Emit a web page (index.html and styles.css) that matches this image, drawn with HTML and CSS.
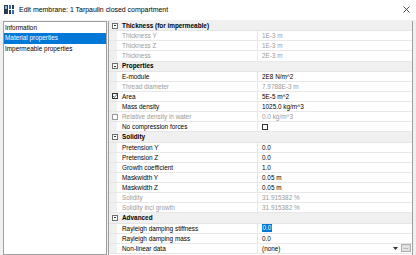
FILE: index.html
```html
<!DOCTYPE html>
<html>
<head>
<meta charset="utf-8">
<link rel="stylesheet" href="styles.css">
</head>
<body>
<div class="window">
  <div class="titlebar">
    <svg class="appicon" width="10" height="9" viewBox="0 0 10 9">
      <rect x="0" y="0" width="4" height="9" fill="#2b3a55"/>
      <rect x="1" y="1" width="2" height="3" fill="#8fb4e0"/>
      <rect x="5" y="0" width="2" height="4" fill="#2f6fc0"/>
      <rect x="8" y="0" width="2" height="4" fill="#2b3a55"/>
      <rect x="5" y="5" width="2" height="4" fill="#2b3a55"/>
      <rect x="8" y="5" width="2" height="4" fill="#2f6fc0"/>
    </svg>
    <span class="title">Edit membrane: 1 Tarpaulin closed compartment</span>
    <svg class="close" width="7" height="7" viewBox="0 0 7 7">
      <path d="M0.5 0.5 L6.5 6.5 M6.5 0.5 L0.5 6.5" stroke="#222" stroke-width="0.8" fill="none"/>
    </svg>
  </div>
  <div class="content">
    <div class="list">
      <div class="item">Information</div>
      <div class="item selected">Material properties</div>
      <div class="item">Impermeable properties</div>
    </div>
    <div class="grid">
      <div class="cat"><span class="toggle"></span><span class="catname">Thickness (for impermeable)</span></div>
      <div class="row ro"><div class="gut"></div><div class="name">Thickness Y</div><div class="val">1E-3 m</div></div>
      <div class="row ro"><div class="gut"></div><div class="name">Thickness Z</div><div class="val">1E-3 m</div></div>
      <div class="row ro"><div class="gut"></div><div class="name">Thickness</div><div class="val">2E-3 m</div></div>
      <div class="cat"><span class="toggle"></span><span class="catname">Properties</span></div>
      <div class="row"><div class="gut"></div><div class="name">E-module</div><div class="val">2E8 N/m^2</div></div>
      <div class="row ro"><div class="gut"></div><div class="name">Thread diameter</div><div class="val">7.9788E-3 m</div></div>
      <div class="row"><div class="gut"><span class="chk checked"><svg width="6" height="6" viewBox="0 0 6 6"><path d="M1 3 L2.4 4.5 L5 1.3" stroke="#333" stroke-width="0.8" fill="none"/></svg></span></div><div class="name">Area</div><div class="val">5E-5 m^2</div></div>
      <div class="row"><div class="gut"></div><div class="name">Mass density</div><div class="val">1025.0 kg/m^3</div></div>
      <div class="row ro"><div class="gut"><span class="chk dim"></span></div><div class="name">Relative density in water</div><div class="val">0.0 kg/m^3</div></div>
      <div class="row"><div class="gut"></div><div class="name">No compression forces</div><div class="val"><span class="chk"></span></div></div>
      <div class="cat"><span class="toggle"></span><span class="catname">Solidity</span></div>
      <div class="row"><div class="gut"></div><div class="name">Pretension Y</div><div class="val">0.0</div></div>
      <div class="row"><div class="gut"></div><div class="name">Pretension Z</div><div class="val">0.0</div></div>
      <div class="row"><div class="gut"></div><div class="name">Growth coefficient</div><div class="val">1.0</div></div>
      <div class="row"><div class="gut"></div><div class="name">Maskwidth Y</div><div class="val">0.05 m</div></div>
      <div class="row"><div class="gut"></div><div class="name">Maskwidth Z</div><div class="val">0.05 m</div></div>
      <div class="row ro"><div class="gut"></div><div class="name">Solidity</div><div class="val">31.915382 %</div></div>
      <div class="row ro"><div class="gut"></div><div class="name">Solidity incl growth</div><div class="val">31.915382 %</div></div>
      <div class="cat"><span class="toggle"></span><span class="catname">Advanced</span></div>
      <div class="row"><div class="gut"></div><div class="name">Rayleigh damping stiffness</div><div class="val"><span class="sel">0.0</span></div></div>
      <div class="row"><div class="gut"></div><div class="name">Rayleigh damping mass</div><div class="val">0.0</div></div>
      <div class="row"><div class="gut"></div><div class="name">Non-linear data</div><div class="val combo"><span class="ctext">(none)</span><span class="drop"><svg width="5" height="3" viewBox="0 0 5 3"><path d="M0 0 H5 L2.5 3 Z" fill="#333"/></svg></span><span class="dots">...</span></div></div>
    </div>
  </div>
</div>
</body>
</html>
```
FILE: styles.css
```css
html, body {
  margin: 0;
  padding: 0;
}
body {
  width: 416px;
  height: 255px;
  overflow: hidden;
  background: #f0f0f0;
  font-family: "Liberation Sans", Arial, sans-serif;
  font-size: 6.4px;
  color: #000;
}
.window {
  width: 416px;
  height: 255px;
  display: flex;
  flex-direction: column;
}
.titlebar {
  height: 20px;
  flex: none;
  background: #fff;
  display: flex;
  align-items: center;
  padding-left: 4px;
  box-sizing: border-box;
}
.appicon {
  flex: none;
  margin-top: -2px;
}
.title {
  margin-left: 5px;
  font-size: 6.95px;
  color: #000;
  flex: 1;
  margin-top: -1px;
}
.close {
  flex: none;
  margin-right: 6px;
  margin-top: -1px;
}
.content {
  flex: 1;
  display: flex;
  padding: 1px 0 0 3px;
  gap: 1px;
  min-height: 0;
}
.list {
  width: 104px;
  flex: none;
  box-sizing: border-box;
  border: 1px solid #a0a0a0;
  background: #fff;
  padding-top: 0.5px;
}
.item {
  height: 10.5px;
  line-height: 10.5px;
  padding-left: 1px;
  white-space: nowrap;
}
.item.selected {
  background: #0078d7;
  color: #fff;
}
.grid {
  width: 305px;
  flex: none;
  box-sizing: border-box;
  border-left: 1px solid #a0a0a0;
  border-right: 1px solid #a0a0a0;
  background: #fff;
  display: flex;
  flex-direction: column;
}
.cat {
  height: 10.14px;
  flex: none;
  box-sizing: border-box;
  background: #f0f0f0;
  border-bottom: 1px solid #e4e4e4;
  display: flex;
  align-items: center;
  padding-left: 3px;
}
.toggle {
  width: 6px;
  height: 6px;
  box-sizing: border-box;
  border: 1px solid #6e6e6e;
  background: #fff;
  position: relative;
  flex: none;
}
.toggle::after {
  content: "";
  position: absolute;
  left: 1px;
  top: 1.5px;
  width: 2px;
  height: 1px;
  background: #333;
}
.catname {
  margin-left: 4px;
  font-weight: bold;
  line-height: 10px;
}
.row {
  height: 10.14px;
  flex: none;
  box-sizing: border-box;
  display: grid;
  grid-template-columns: 8px 140px 1fr;
  border-bottom: 1px solid #e8e8e8;
}
.gut {
  background: #f0f0f0;
  display: flex;
  align-items: center;
  overflow: visible;
}
.name {
  padding-left: 5px;
  line-height: 9.14px;
  white-space: nowrap;
  overflow: hidden;
}
.val {
  border-left: 1px solid #e8e8e8;
  padding-left: 4px;
  line-height: 9.14px;
  white-space: nowrap;
  display: flex;
  align-items: center;
}
.ro .name, .ro .val {
  color: #9b9b9b;
}
.chk {
  width: 6px;
  height: 6px;
  box-sizing: border-box;
  border: 1px solid #333;
  background: #fff;
  flex: none;
  margin-left: 3px;
  display: flex;
  align-items: center;
  justify-content: center;
  position: relative;
  z-index: 1;
}
.val .chk {
  margin-left: 0;
}
.chk.checked svg {
  position: absolute;
  left: -1px;
  top: -1px;
}
.chk.dim {
  border-color: #9a9a9a;
}
.sel {
  background: #0078d7;
  color: #fff;
  padding: 0 0.5px;
  line-height: 8px;
}
.combo {
  padding-right: 0;
}
.ctext {
  flex: 1;
}
.drop {
  width: 7px;
  height: 8px;
  flex: none;
  display: flex;
  align-items: center;
  justify-content: center;
  background: #fff;
}
.dots {
  width: 10px;
  height: 8px;
  flex: none;
  margin-left: 2px;
  margin-right: 1px;
  box-sizing: border-box;
  border: 1px solid #adadad;
  background: #e1e1e1;
  font-size: 6px;
  line-height: 4px;
  text-align: center;
  color: #333;
}
```
